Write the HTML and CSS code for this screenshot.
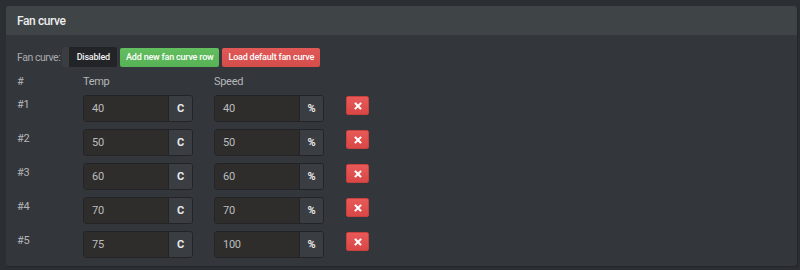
FILE: index.html
```html
<!DOCTYPE html>
<html>
<head>
<meta charset="utf-8">
<link rel="stylesheet" href="styles.css">
</head>
<body>
<div class="panel">
  <div class="panel-heading">Fan curve</div>
  <div class="panel-body">
    <div class="toolbar">
      <span class="label">Fan curve:</span>
      <span class="toggle"><span class="toggle-handle"></span><span class="toggle-text">Disabled</span></span>
      <button class="btn btn-green">Add new fan curve row</button>
      <button class="btn btn-red">Load default fan curve</button>
    </div>
    <div class="row head">
      <div class="col-num">#</div>
      <div class="col-group">Temp</div>
      <div class="col-group">Speed</div>
    </div>
    <div class="row">
      <div class="col-num">#1</div>
      <div class="col-group group"><span class="input">40</span><span class="addon">C</span></div>
      <div class="col-group group"><span class="input">40</span><span class="addon">%</span></div>
      <button class="del"><svg viewBox="0 0 10 10" width="8" height="8"><path d="M2 2 L8 8 M8 2 L2 8" stroke="#fff" stroke-width="2.6" stroke-linecap="square"/></svg></button>
    </div>
    <div class="row">
      <div class="col-num">#2</div>
      <div class="col-group group"><span class="input">50</span><span class="addon">C</span></div>
      <div class="col-group group"><span class="input">50</span><span class="addon">%</span></div>
      <button class="del"><svg viewBox="0 0 10 10" width="8" height="8"><path d="M2 2 L8 8 M8 2 L2 8" stroke="#fff" stroke-width="2.6" stroke-linecap="square"/></svg></button>
    </div>
    <div class="row">
      <div class="col-num">#3</div>
      <div class="col-group group"><span class="input">60</span><span class="addon">C</span></div>
      <div class="col-group group"><span class="input">60</span><span class="addon">%</span></div>
      <button class="del"><svg viewBox="0 0 10 10" width="8" height="8"><path d="M2 2 L8 8 M8 2 L2 8" stroke="#fff" stroke-width="2.6" stroke-linecap="square"/></svg></button>
    </div>
    <div class="row">
      <div class="col-num">#4</div>
      <div class="col-group group"><span class="input">70</span><span class="addon">C</span></div>
      <div class="col-group group"><span class="input">70</span><span class="addon">%</span></div>
      <button class="del"><svg viewBox="0 0 10 10" width="8" height="8"><path d="M2 2 L8 8 M8 2 L2 8" stroke="#fff" stroke-width="2.6" stroke-linecap="square"/></svg></button>
    </div>
    <div class="row">
      <div class="col-num">#5</div>
      <div class="col-group group"><span class="input">75</span><span class="addon">C</span></div>
      <div class="col-group group"><span class="input">100</span><span class="addon">%</span></div>
      <button class="del"><svg viewBox="0 0 10 10" width="8" height="8"><path d="M2 2 L8 8 M8 2 L2 8" stroke="#fff" stroke-width="2.6" stroke-linecap="square"/></svg></button>
    </div>
  </div>
</div>
</body>
</html>
```
FILE: styles.css
```css
html, body {
  margin: 0;
  padding: 0;
  background: #2b2e33;
  font-family: Roboto, "Liberation Sans", sans-serif;
  color: #b4b6b8;
}
body {
  padding: 6px 3px 4px 6px;
  height: 270px;
  box-sizing: border-box;
}
.panel {
  background: #33363b;
  border-radius: 3px;
  box-shadow: 1px 1px 1px #25272b;
  height: 260px;
  overflow: hidden;
}
.panel-heading {
  height: 29px;
  background: #3f4447;
  color: #eceded;
  font-size: 12px;
  font-weight: 500;
  letter-spacing: -0.4px;
  padding-left: 11px;
  display: flex;
  align-items: center;
}
.panel-body {
  padding: 12px 11px 0 11px;
}
.toolbar {
  display: flex;
  align-items: center;
  height: 20px;
  font-size: 10.5px;
  letter-spacing: -0.45px;
}
.label {
  color: #a9abad;
  margin-right: 2px;
}
.toggle {
  display: flex;
  height: 20px;
  width: 55px;
  background: #222427;
  border-radius: 2px;
  overflow: hidden;
  margin-right: 3px;
}
.toggle-handle {
  width: 7px;
  background: #3a3d41;
}
.toggle-text {
  flex: 1;
  display: flex;
  align-items: center;
  justify-content: center;
  color: #f0f0f0;
  font-weight: 500;
  font-size: 9px;
  letter-spacing: -0.2px;
}
.btn {
  height: 19px;
  border: none;
  border-radius: 2px;
  color: #fff;
  font-family: inherit;
  font-size: 9px;
  font-weight: 500;
  letter-spacing: -0.2px;
  white-space: nowrap;
  padding: 0;
  margin-right: 3px;
  text-align: center;
}
.btn-green {
  width: 99px;
  background: linear-gradient(#62be5f, #57b155);
}
.btn-red {
  width: 98px;
  background: linear-gradient(#e05956, #d44d4a);
}
.row {
  display: flex;
  height: 27px;
  margin-bottom: 7px;
  font-size: 11px;
  letter-spacing: -0.3px;
}
.row.head {
  height: 14px;
  margin-top: 7px;
  margin-bottom: 7px;
  align-items: center;
}
.col-num {
  width: 66px;
  padding-top: 3px;
}
.row.head .col-num { padding-top: 0; }
.col-group {
  width: 110px;
  margin-right: 21px;
}
.group {
  display: flex;
  border: 1px solid #232427;
  border-radius: 3px;
  box-sizing: border-box;
  overflow: hidden;
}
.input {
  flex: 1;
  background: #2e2d2c;
  color: #bcbdbe;
  display: flex;
  align-items: center;
  padding-left: 8px;
  border-right: 1px solid #232427;
}
.addon {
  width: 23px;
  background: #3a3d41;
  color: #e8e9ea;
  font-weight: 700;
  display: flex;
  align-items: center;
  justify-content: center;
}
.del {
  width: 23px;
  height: 19px;
  margin-top: 1px;
  margin-left: 1px;
  border: 1px solid #c9403f;
  border-radius: 2px;
  background: linear-gradient(#e75a58, #d94746);
  padding: 0;
  display: flex;
  align-items: center;
  justify-content: center;
}
.del svg { display: block; }
```
